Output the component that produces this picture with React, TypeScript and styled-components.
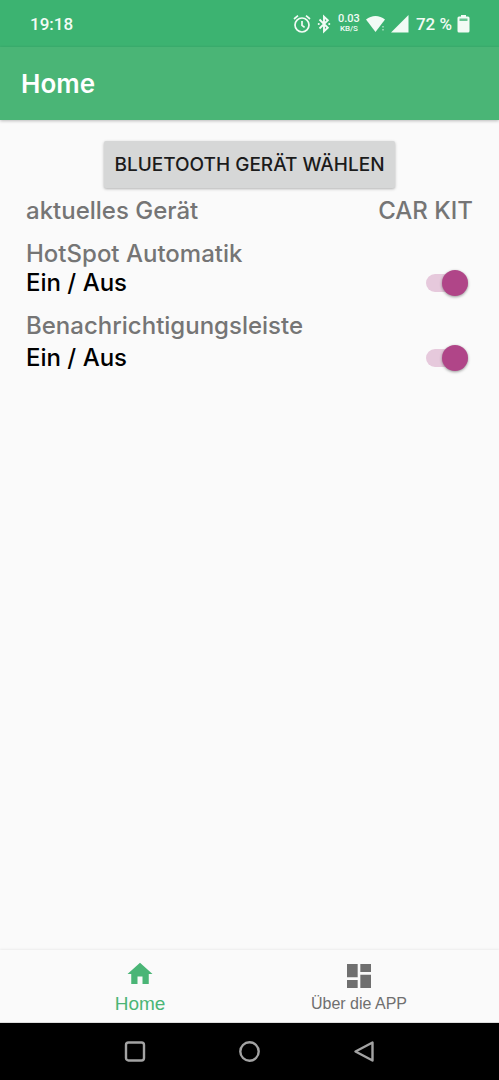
import React, { useState } from "react";
import styled, { createGlobalStyle } from "styled-components";

const GlobalStyle = createGlobalStyle`
  *, *::before, *::after { box-sizing: border-box; }
  body {
    margin: 0;
    background: #fafafa;
    font-family: Inter, "Liberation Sans", Arial, sans-serif;
  }
  button, input { font: inherit; margin: 0; }
`;

const Screen = styled.div`
  display: flex;
  flex-direction: column;
  min-height: 100vh;
  background: #fafafa;
`;

const StatusBar = styled.div`
  display: flex;
  align-items: center;
  justify-content: space-between;
  height: 47px;
  padding: 0 29px 0 30px;
  background: #3cb371;
  color: #f2fbf5;
  font-family: Roboto, sans-serif;
  font-size: 17px;
  font-weight: 500;
  line-height: 20px;
`;

const StatusIcons = styled.div`
  display: flex;
  align-items: center;
  gap: 5px;

  svg { display: block; flex: none; }
`;

const BatteryLevel = styled.span`
  padding-left: 2px;
`;

const NetSpeed = styled.div`
  display: flex;
  flex-direction: column;
  align-items: center;
  width: 24px;
  font-size: 11px;
  line-height: 10px;
`;

const SpeedUnit = styled.span`
  font-size: 8px;
  line-height: 9px;
`;

const AppBar = styled.header`
  display: flex;
  align-items: center;
  height: 73px;
  padding: 0 21px;
  background: #4ab576;
  box-shadow: 0 1px 3px rgba(0, 0, 0, 0.25);
`;

const Title = styled.h1`
  margin: 0;
  color: #fff;
  font-size: 26px;
  font-weight: 600;
  line-height: 32px;
`;

const Content = styled.main`
  display: flex;
  flex: 1;
  flex-direction: column;
  padding: 21px 26px;
  font-size: 24px;
  font-weight: 500;
  line-height: 29px;
`;

const DeviceButton = styled.button`
  align-self: center;
  height: 47px;
  padding: 0 10px;
  border: 0;
  border-radius: 2px;
  background: #d6d7d7;
  box-shadow: 0 1px 3px rgba(0, 0, 0, 0.3);
  color: #1b1b1b;
  font-size: 19px;
  font-weight: 500;
  text-transform: uppercase;
  white-space: nowrap;
`;

const DeviceRow = styled.div`
  display: flex;
  justify-content: space-between;
  margin-top: 8px;
  color: #757575;
`;

const Setting = styled.section<{ $gap: number }>`
  display: flex;
  flex-direction: column;
  gap: ${(p) => p.$gap}px;
  margin-top: 14px;
`;

const SettingTitle = styled.h2`
  margin: 0;
  color: #757575;
  font: inherit;
`;

const SwitchLabel = styled.label`
  display: flex;
  align-items: center;
  justify-content: space-between;
  padding-right: 5px;
  color: #000;
`;

const Switch = styled.input`
  appearance: none;
  display: flex;
  align-items: center;
  width: 42px;
  height: 18px;
  border-radius: 9px;
  background: #e6c9dc;
  cursor: pointer;

  &::before {
    content: "";
    width: 26px;
    height: 26px;
    border-radius: 50%;
    background: #fafafa;
    box-shadow: 0 1px 3px rgba(0, 0, 0, 0.4);
  }
  &:not(:checked) { background: #b9b9b9; }
  &:checked::before { margin-left: 16px; background: #b04588; }
`;

const TabBar = styled.nav`
  display: flex;
  justify-content: center;
  height: 73px;
  border-bottom: 1px solid #dcdcdc;
  background: #fafafa;
  box-shadow: 0 -1px 2px rgba(0, 0, 0, 0.06);
`;

const Tab = styled.a<{ $active?: boolean }>`
  display: flex;
  flex: 0 1 219px;
  flex-direction: column;
  align-items: center;
  justify-content: flex-end;
  gap: ${(p) => (p.$active ? 5 : 2)}px;
  padding-bottom: 8px;
  color: ${(p) => (p.$active ? "#4ab576" : "#6f6f6f")};
  font-family: "Liberation Sans", Arial, sans-serif;
  font-size: ${(p) => (p.$active ? 19 : 16)}px;
  line-height: 20px;
  text-decoration: none;

  svg { display: block; }
`;

const SystemBar = styled.div`
  display: flex;
  justify-content: center;
  height: 57px;
  background: #000;
`;

const SystemButton = styled.button`
  display: flex;
  flex: 0 1 115px;
  align-items: center;
  justify-content: center;
  padding: 0;
  border: 0;
  background: none;
  color: #a3a3a3;
`;

function StatusArea() {
  return (
    <StatusBar>
      <span>19:18</span>
      <StatusIcons>
        <svg width="18" height="20" viewBox="0 0 18 20" fill="none" stroke="currentColor" strokeWidth="1.7">
          <circle cx="9" cy="11" r="7" />
          <path d="M9 7v4.3l2.6 2M1 5l4-3.3M17 5l-4-3.3" />
        </svg>
        <svg width="16" height="20" viewBox="0 0 16 20" fill="none" stroke="currentColor" strokeWidth="1.9">
          <path d="M3.5 5.5l8.3 8.3L8 17.3V2.7l3.8 3.5-8.3 8.3" />
          <path d="M2.7 10h.1M13.2 10h.1" strokeWidth="2" strokeLinecap="round" />
        </svg>
        <NetSpeed>
          <span>0.03</span>
          <SpeedUnit>KB/S</SpeedUnit>
        </NetSpeed>
        <svg width="20" height="18" viewBox="0 0 20 18" fill="currentColor">
          <path d="M0 4.5C5.5-.3 13.5-.3 19 4.5L9.5 17z" />
          <path d="M16 11h2v1.5h-2zM16 14h2v1.5h-2z" opacity=".45" />
        </svg>
        <svg width="18" height="18" viewBox="0 0 18 18" fill="currentColor">
          <path d="M17.5 0v17.5H0z" />
        </svg>
        <BatteryLevel>72&nbsp;%</BatteryLevel>
        <svg width="13" height="19" viewBox="0 0 13 19" fill="currentColor">
          <path d="M4 1h5v1.5h2a1.5 1.5 0 0 1 1.5 1.5v13a1.5 1.5 0 0 1-1.5 1.5H2A1.5 1.5 0 0 1 .5 17V4A1.5 1.5 0 0 1 2 2.5h2z" />
          <path d="M2.5 4.5h8V7h-8z" fill="#3cb371" opacity=".75" />
        </svg>
      </StatusIcons>
    </StatusBar>
  );
}

function SwitchSetting({ title, gap }: { title: string; gap: number }) {
  const [on, setOn] = useState(true);
  return (
    <Setting $gap={gap}>
      <SettingTitle>{title}</SettingTitle>
      <SwitchLabel>
        Ein / Aus
        <Switch type="checkbox" role="switch" checked={on} onChange={(e) => setOn(e.target.checked)} />
      </SwitchLabel>
    </Setting>
  );
}

export default function App() {
  return (
    <>
      <GlobalStyle />
      <Screen>
        <StatusArea />
        <AppBar>
          <Title>Home</Title>
        </AppBar>
        <Content>
          <DeviceButton type="button">Bluetooth Gerät wählen</DeviceButton>
          <DeviceRow>
            <span>aktuelles Gerät</span>
            <span>CAR KIT</span>
          </DeviceRow>
          <SwitchSetting title="HotSpot Automatik" gap={0} />
          <SwitchSetting title="Benachrichtigungsleiste" gap={3} />
        </Content>
        <TabBar>
          <Tab href="#home" $active>
            <svg width="30" height="30" viewBox="0 0 24 24" fill="currentColor">
              <path d="M10 20v-6h4v6h5v-8h3L12 3 2 12h3v8z" />
            </svg>
            Home
          </Tab>
          <Tab href="#about">
            <svg width="32" height="32" viewBox="0 0 24 24" fill="currentColor">
              <path d="M3 13h8V3H3v10zm0 8h8v-6H3v6zm10 0h8V11h-8v10zm0-18v6h8V3h-8z" />
            </svg>
            Über die APP
          </Tab>
        </TabBar>
        <SystemBar>
          <SystemButton type="button" aria-label="Overview">
            <svg width="22" height="22" viewBox="0 0 22 22" fill="none" stroke="currentColor" strokeWidth="2.4">
              <rect x="2" y="1.5" width="18" height="18" rx="2.5" />
            </svg>
          </SystemButton>
          <SystemButton type="button" aria-label="Home">
            <svg width="22" height="22" viewBox="0 0 22 22" fill="none" stroke="currentColor" strokeWidth="2.4">
              <circle cx="10.5" cy="10.5" r="9.2" />
            </svg>
          </SystemButton>
          <SystemButton type="button" aria-label="Back">
            <svg width="22" height="22" viewBox="0 0 22 22" fill="none" stroke="currentColor" strokeWidth="2.4" strokeLinejoin="round">
              <path d="M18.5 1.5v18L1.5 10.5z" />
            </svg>
          </SystemButton>
        </SystemBar>
      </Screen>
    </>
  );
}
